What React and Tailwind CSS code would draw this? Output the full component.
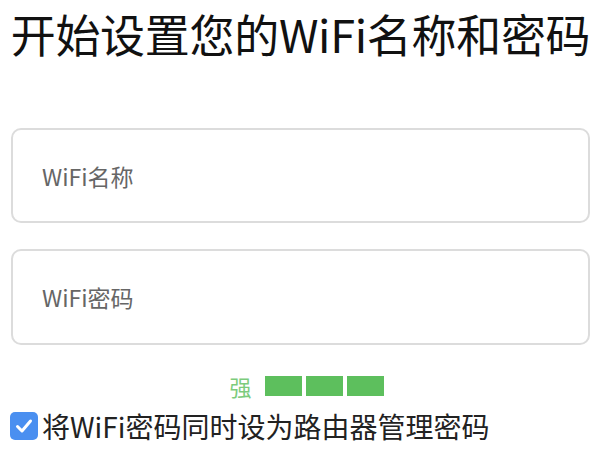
import React, { useState } from "react";

const FONT = { fontFamily: '"Noto Sans CJK SC", "Noto Sans", sans-serif' };

export default function App() {
  const [name, setName] = useState("");
  const [pwd, setPwd] = useState("");
  const [same, setSame] = useState(true);

  return (
    <div className="w-[601px] h-[457px] bg-white overflow-hidden" style={FONT}>
      <h1 className="pt-[6px] text-center text-[45px] leading-[56px] text-[#111] tracking-[-0.3px]">
        开始设置您的WiFi名称和密码
      </h1>

      <div className="mt-[66px] flex flex-col gap-[26px] px-[11px]">
        <input
          value={name}
          onChange={(e) => setName(e.target.value)}
          placeholder="WiFi名称"
          className="h-[95px] w-full rounded-[10px] border-2 border-[#dcdcdc] px-[29px] text-[23px] text-[#333] placeholder:text-[#666] outline-none"
        />
        <input
          value={pwd}
          onChange={(e) => setPwd(e.target.value)}
          placeholder="WiFi密码"
          className="h-[96px] w-full rounded-[10px] border-2 border-[#dcdcdc] px-[29px] text-[23px] text-[#333] placeholder:text-[#666] outline-none"
        />
      </div>

      <div className="mt-[29px] flex items-center justify-center gap-[13px] pl-[12px]">
        <span className="text-[22px] leading-[24px] text-[#7ccb7c]">强</span>
        <div className="flex gap-[4px]">
          <div className="h-[20px] w-[37px] bg-[#5dbf5d]" />
          <div className="h-[20px] w-[37px] bg-[#5dbf5d]" />
          <div className="h-[20px] w-[37px] bg-[#5dbf5d]" />
        </div>
      </div>

      <label className="mt-[12px] flex items-center gap-[4px] pl-[10px] cursor-pointer">
        <span
          onClick={() => setSame(!same)}
          className={
            same
              ? "flex h-[28px] w-[28px] items-center justify-center rounded-[5px] bg-[#4a8ff0]"
              : "flex h-[28px] w-[28px] items-center justify-center rounded-[5px] border-2 border-[#999] bg-white"
          }
        >
          {same && (
            <svg width="20" height="20" viewBox="0 0 20 20" fill="none">
              <path d="M3.5 10.5l4.5 4.5 8.5-10" stroke="white" strokeWidth="3" strokeLinecap="round" strokeLinejoin="round" />
            </svg>
          )}
        </span>
        <span className="text-[28px] leading-[32px] text-[#222]">将WiFi密码同时设为路由器管理密码</span>
      </label>
    </div>
  );
}
